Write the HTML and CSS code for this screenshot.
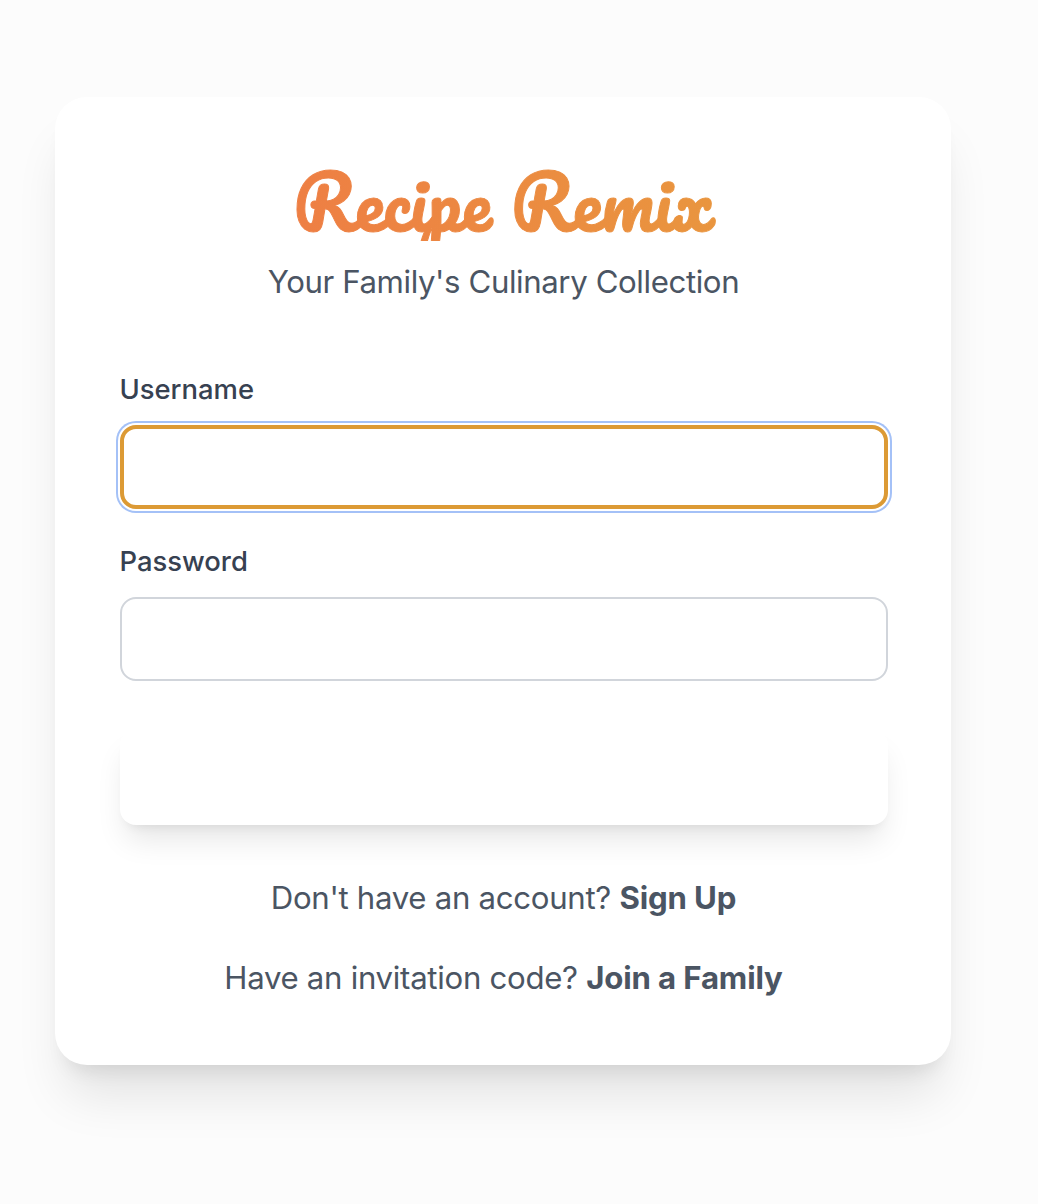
FILE: index.html
```html
<!DOCTYPE html>
<html lang="en">
<head>
<meta charset="utf-8">
<title>Recipe Remix</title>
<link rel="stylesheet" href="styles.css">
</head>
<body>
<main class="card">
  <header class="brand">
    <h1 class="title">Recipe Remix</h1>
    <p class="tagline">Your Family's Culinary Collection</p>
  </header>
  <form class="form">
    <div class="field">
      <label class="label" for="username">Username</label>
      <input class="input input-active" id="username" type="text">
    </div>
    <div class="field">
      <label class="label" for="password">Password</label>
      <input class="input" id="password" type="password">
    </div>
    <button class="submit" type="button"></button>
  </form>
  <footer class="links">
    <p>Don't have an account? <a class="link">Sign Up</a></p>
    <p>Have an invitation code? <a class="link">Join a Family</a></p>
  </footer>
</main>
</body>
</html>
```

FILE: styles.css
```css
* { box-sizing: border-box; }
body {
  margin: 0;
  min-height: 1204px;
  padding: 97px 87px 139px 55px;
  background: #fcfcfc;
  color: #4b5563;
  font-family: Inter, "Liberation Sans", sans-serif;
  font-size: 31.2px;
  font-weight: 430;
  line-height: 48px;
}
h1, p { margin: 0; }
.card {
  height: 968px;
  padding: 64px 63.5px 64px 64.5px;
  border-radius: 32px;
  background: #fff;
  box-shadow: 0 40px 50px -10px rgba(0, 0, 0, .1), 0 16px 20px -12px rgba(0, 0, 0, .1);
}
.brand {
  display: flex;
  flex-direction: column;
  gap: 16px;
  margin-bottom: 64px;
  text-align: center;
}
.title {
  height: 80px;
  background: linear-gradient(80deg, #f07546, #e79f3c);
  -webkit-background-clip: text;
  background-clip: text;
  color: transparent;
  font-family: Pacifico, cursive;
  font-size: 72px;
  font-weight: 400;
  line-height: 81px;
  -webkit-text-stroke: 1px transparent;
}
.tagline {
  padding-top: 1px;
  margin-bottom: -1px;
  letter-spacing: -.4px;
}
.form { display: flex; flex-direction: column; gap: 32px; }
.field { display: flex; flex-direction: column; gap: 16px; }
.label {
  height: 40px;
  color: #374151;
  font-size: 27.4px;
  font-weight: 550;
  line-height: 40px;
}
.input {
  width: 100%;
  height: 84px;
  padding: 16px 32px;
  border: 2px solid #d1d5db;
  border-radius: 16px;
  background: #fff;
  font: inherit;
  outline: none;
}
.input-active {
  border: 4px solid #dc9a35;
  box-shadow: 0 0 0 2px #fff, 0 0 0 4px #a4c1f7;
}
.submit {
  height: 96px;
  margin-top: 16px;
  border: 0;
  border-radius: 16px;
  background: #fff;
  box-shadow: 0 20px 30px -6px rgba(0, 0, 0, .1), 0 8px 12px -8px rgba(0, 0, 0, .1);
}
.links {
  display: flex;
  flex-direction: column;
  gap: 32px;
  margin-top: 49px;
  text-align: center;
}
.links p { letter-spacing: -.3px; white-space: nowrap; }
.link { font-weight: 700; letter-spacing: -.15px; }
```
